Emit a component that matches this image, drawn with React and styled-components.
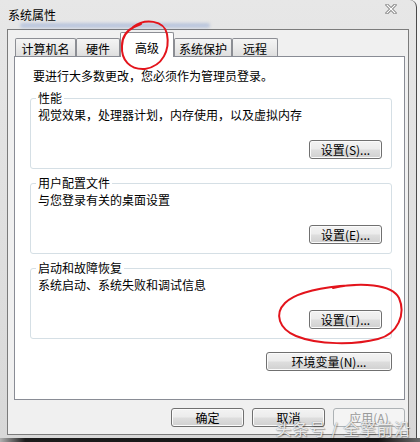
import React from "react";
import styled, { createGlobalStyle } from "styled-components";

const GlobalStyle = createGlobalStyle`
  html, body { margin: 0; padding: 0; background: #f3f3f3; }
  body {
    font-family: "Noto Sans CJK SC", "Noto Sans", "Liberation Sans", sans-serif;
    font-size: 12px;
    color: #000;
  }
  * { box-sizing: border-box; }
`;

const Screen = styled.div`
  position: relative;
  width: 420px;
  height: 442px;
  overflow: hidden;
  display: flex;
  flex-direction: column;
  background: #f3f3f3;
`;

const Frame = styled.div`
  width: 417px;
  height: 438px;
  border-right: 1px solid #4a4a4a;
  border-top-right-radius: 7px;
  background: linear-gradient(#e7e7e7, #dedede 60%, #d8d8d8);
  padding: 0 7px 3px 7px;
  display: flex;
  flex-direction: column;
`;

const BottomShadow = styled.div`
  height: 4px;
  width: 420px;
  background: linear-gradient(to right, #b0b0b0, #1c1c1c 6%, #141414 90%, #6a6a6a);
`;

const TitleBar = styled.div`
  height: 29px;
  display: flex;
  align-items: flex-start;
`;

const TitleCol = styled.div`
  display: flex;
  flex-direction: column;
  padding: 8px 0 0 1px;
`;

const Title = styled.div`
  font-size: 12px;
  line-height: 14px;
  color: #000;
`;

const Smear = styled.div`
  width: 190px;
  height: 5px;
  margin: 1px 0 0 12px;
  border-radius: 3px;
  background: rgba(110, 140, 205, 0.35);
  filter: blur(1.5px);
`;

const CloseGlyph = styled.svg`
  margin-left: auto;
  margin-right: 12px;
  margin-top: 4px;
`;

const Client = styled.div`
  flex: 1;
  border: 1px solid #7b7b7b;
  background: #f0f0f0;
  padding: 2px 3px 7px 6px;
  display: flex;
  flex-direction: column;
`;

const TabRow = styled.div`
  position: relative;
  z-index: 1;
  height: 24px;
  margin-left: 1px;
  display: flex;
  align-items: flex-end;
`;

const Tab = styled.div`
  width: ${(p) => p.$w}px;
  height: ${(p) => (p.$active ? 25 : 18)}px;
  margin-bottom: ${(p) => (p.$active ? -1 : 0)}px;
  padding-top: ${(p) => (p.$active ? 8 : 3)}px;
  border: 1px solid #8c8e94;
  border-bottom: none;
  border-radius: 2px 2px 0 0;
  background: ${(p) =>
    p.$active ? "#ffffff" : "linear-gradient(#f4f4f4, #ebebeb 50%, #dedede)"};
  text-align: center;
  line-height: 14px;
  font-size: 12px;
  white-space: nowrap;
`;

const Panel = styled.div`
  flex: 1;
  border: 1px solid #898c95;
  background: #ffffff;
  padding: 12px 12px 0 15px;
  display: flex;
  flex-direction: column;
`;

const Notice = styled.div`
  margin: 0 0 8px 3px;
  line-height: 14px;
`;

const Groups = styled.div`
  display: flex;
  flex-direction: column;
  gap: 7px;
`;

const GroupBox = styled.fieldset`
  margin: 0;
  min-width: 0;
  border: 1px solid #d5dfe5;
  border-radius: 3px;
  padding: 3px 9px 9px 7px;
`;

const Legend = styled.legend`
  padding: 0 2px;
  margin-left: -2px;
  line-height: 14px;
  font-size: 12px;
`;

const Desc = styled.div`
  line-height: 14px;
`;

const RightRow = styled.div`
  display: flex;
  justify-content: flex-end;
  gap: ${(p) => p.$gap || 0}px;
  margin-top: ${(p) => p.$top || 0}px;
`;

const Button = styled.button`
  width: ${(p) => p.$w || 73}px;
  height: 19px;
  padding: 0;
  border: 1px solid ${(p) => (p.disabled ? "#adb2b5" : "#707070")};
  border-radius: 3px;
  background: ${(p) =>
    p.disabled
      ? "#f4f4f4"
      : "linear-gradient(#f3f3f3 0%, #ececec 45%, #dddddd 55%, #d0d0d0 100%)"};
  box-shadow: inset 0 0 0 1px ${(p) => (p.disabled ? "#f4f4f4" : "#fbfbfb")};
  color: ${(p) => (p.disabled ? "#9a9a9a" : "#000")};
  font-family: "Noto Sans CJK SC", "Noto Sans", sans-serif;
  font-size: 12px;
  line-height: 17px;
  text-align: center;
  white-space: nowrap;
`;

const Annotations = styled.svg`
  position: absolute;
  left: 0;
  top: 0;
  pointer-events: none;
  z-index: 5;
`;

const Watermark = styled.div`
  position: absolute;
  right: 9px;
  bottom: 5px;
  z-index: 6;
  font-family: "Noto Sans CJK SC", sans-serif;
  font-size: 16px;
  line-height: 18px;
  letter-spacing: 1px;
  color: rgba(255, 255, 255, 0.85);
  text-shadow: 0 0 1px #6d6d6d, 1px 1px 1px rgba(0, 0, 0, 0.3);
  white-space: nowrap;
`;

const tabs = [
  { label: "计算机名", w: 61 },
  { label: "硬件", w: 44 },
  { label: "高级", w: 54, active: true },
  { label: "系统保护", w: 58 },
  { label: "远程", w: 46 },
];

const groups = [
  { title: "性能", desc: "视觉效果，处理器计划，内存使用，以及虚拟内存", btn: "设置(S)..." },
  { title: "用户配置文件", desc: "与您登录有关的桌面设置", btn: "设置(E)..." },
  { title: "启动和故障恢复", desc: "系统启动、系统失败和调试信息", btn: "设置(T)..." },
];

export default function App() {
  return (
    <Screen>
      <GlobalStyle />
      <Frame>
        <TitleBar>
          <TitleCol>
            <Title>系统属性</Title>
            <Smear />
          </TitleCol>
          <CloseGlyph width="12" height="10" viewBox="0 0 12 10">
            <path d="M2 1 L10 9 M10 1 L2 9" stroke="#7d7d7d" strokeWidth="3" strokeLinecap="square" />
            <path d="M2 1 L10 9 M10 1 L2 9" stroke="#ffffff" strokeWidth="1.2" strokeLinecap="square" />
          </CloseGlyph>
        </TitleBar>
        <Client>
          <TabRow>
            {tabs.map((t) => (
              <Tab key={t.label} $w={t.w} $active={t.active}>
                {t.label}
              </Tab>
            ))}
          </TabRow>
          <Panel>
            <Notice>要进行大多数更改，您必须作为管理员登录。</Notice>
            <Groups>
              {groups.map((g) => (
                <GroupBox key={g.title}>
                  <Legend>{g.title}</Legend>
                  <Desc>{g.desc}</Desc>
                  <RightRow $top={18}>
                    <Button>{g.btn}</Button>
                  </RightRow>
                </GroupBox>
              ))}
            </Groups>
            <RightRow $top={13}>
              <Button $w={126} style={{ marginRight: 0 }}>环境变量(N)...</Button>
            </RightRow>
          </Panel>
          <RightRow $top={8} $gap={8}>
            <Button>确定</Button>
            <Button>取消</Button>
            <Button $w={72} disabled>应用(A)</Button>
          </RightRow>
        </Client>
      </Frame>
      <BottomShadow />
      <Annotations width="420" height="442" viewBox="0 0 420 442">
        <path
          d="M133 27 C145 18, 164 20, 167 34 C170 50, 163 66, 145 69 C130 70, 121 60, 122 46 C122 38, 126 31, 134 27 L141 24"
          fill="none"
          stroke="#e3141c"
          strokeWidth="2"
          strokeLinecap="round"
        />
        <path
          d="M333 288 C360 282, 392 284, 399 298 C406 314, 398 334, 378 339 C355 345, 318 345, 296 336 C279 329, 274 314, 285 303 C294 294, 312 289, 340 286 L356 285"
          fill="none"
          stroke="#e3141c"
          strokeWidth="2"
          strokeLinecap="round"
        />
      </Annotations>
      <Watermark>头条号 / 全擎前沿</Watermark>
    </Screen>
  );
}
